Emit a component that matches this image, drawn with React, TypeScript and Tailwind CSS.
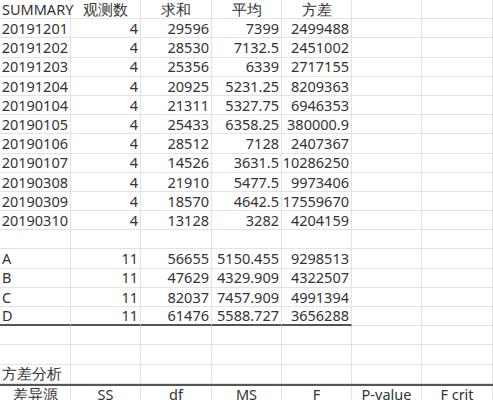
const widths = ["w-[71px]", "w-[70px]", "w-[71px]", "w-[70px]", "w-[70px]", "w-[70px]", "w-[71px]"];
type Cell = { t?: string; a?: "l" | "r" | "c" };
const L = (t: string): Cell => ({ t, a: "l" });
const R = (t: string): Cell => ({ t, a: "r" });
const C = (t: string): Cell => ({ t, a: "c" });

const data: [string, string, string, string, string][] = [
  ["20191201", "4", "29596", "7399", "2499488"],
  ["20191202", "4", "28530", "7132.5", "2451002"],
  ["20191203", "4", "25356", "6339", "2717155"],
  ["20191204", "4", "20925", "5231.25", "8209363"],
  ["20190104", "4", "21311", "5327.75", "6946353"],
  ["20190105", "4", "25433", "6358.25", "380000.9"],
  ["20190106", "4", "28512", "7128", "2407367"],
  ["20190107", "4", "14526", "3631.5", "10286250"],
  ["20190308", "4", "21910", "5477.5", "9973406"],
  ["20190309", "4", "18570", "4642.5", "17559670"],
  ["20190310", "4", "13128", "3282", "4204159"],
];
const grp: [string, string, string, string, string][] = [
  ["A", "11", "56655", "5150.455", "9298513"],
  ["B", "11", "47629", "4329.909", "4322507"],
  ["C", "11", "82037", "7457.909", "4991394"],
  ["D", "11", "61476", "5588.727", "3656288"],
];

const rows: { cells: Cell[]; thickBottom?: number; thickTop?: boolean }[] = [
  { cells: [L("SUMMARY"), C("观测数"), C("求和"), C("平均"), C("方差")] },
  ...data.map((d) => ({ cells: [R(d[0]), R(d[1]), R(d[2]), R(d[3]), R(d[4])] })),
  { cells: [] },
  ...grp.map((d, i) => ({
    cells: [L(d[0]), R(d[1]), R(d[2]), R(d[3]), R(d[4])],
    thickBottom: i === 3 ? 5 : undefined,
  })),
  { cells: [] },
  { cells: [] },
  { cells: [L("方差分析")] },
  { cells: [C("差异源"), C("SS"), C("df"), C("MS"), C("F"), C("P-value"), C("F crit")], thickTop: true },
];

export default function App() {
  return (
    <div className="w-[493px] h-[400px] overflow-hidden bg-white text-[#333] text-[14.5px] font-['Noto_Sans_CJK_SC','Noto_Sans',sans-serif]">
      {rows.map((r, ri) => (
        <div key={ri} className={`flex h-[19.2px] ${r.thickTop ? "border-t-2 border-[#555]" : ""}`}>
          {widths.map((w, ci) => {
            const c = r.cells[ci];
            const thick = r.thickBottom !== undefined && ci < r.thickBottom;
            const al = c?.a === "r" ? "justify-end" : c?.a === "c" ? "justify-center" : "justify-start";
            return (
              <div
                key={ci}
                className={`${w} shrink-0 flex items-center px-[2px] leading-none whitespace-nowrap border-r border-[#e3e3e3] ${al} ${
                  thick ? "border-b-2 border-b-[#555]" : "border-b border-b-[#e3e3e3]"
                }`}
              >
                {c?.t}
              </div>
            );
          })}
        </div>
      ))}
    </div>
  );
}
